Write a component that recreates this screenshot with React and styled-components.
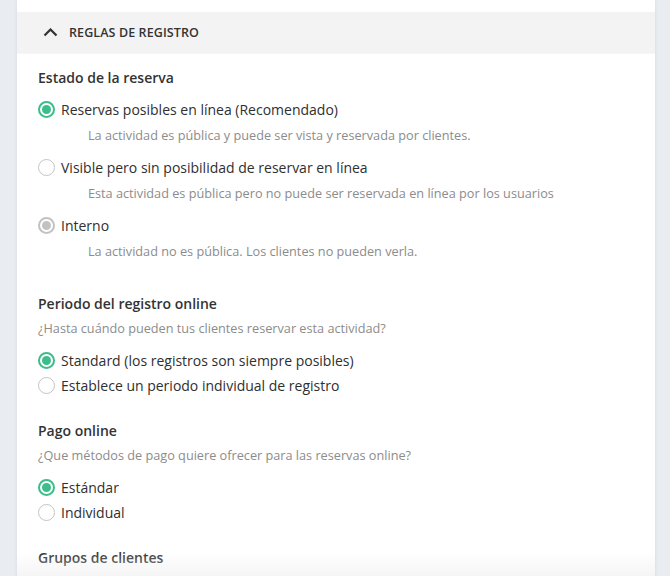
import styled, { createGlobalStyle } from 'styled-components';

const GlobalStyle = createGlobalStyle`
  html, body {
    margin: 0;
    padding: 0;
    background: #e9edf2;
    font-family: 'Open Sans', 'Noto Sans', sans-serif;
    -webkit-font-smoothing: antialiased;
  }
`;

const Page = styled.div`
  height: 576px;
  overflow: hidden;
  padding: 0 15px 0 17px;
  background: #e9edf2;
`;

const Panel = styled.div`
  position: relative;
  height: 100%;
  overflow: hidden;
  background: #fff;
  padding-top: 12px;
  box-shadow: 0 0 4px rgba(0, 0, 0, 0.08);
`;

const Header = styled.div`
  display: flex;
  align-items: center;
  gap: 11px;
  height: 42px;
  padding-left: 26px;
  background: #f3f3f3;
  border-bottom: 1px solid #f6f6f6;
  box-sizing: border-box;
  color: #333;
  font-size: 12.5px;
  font-weight: 600;
  letter-spacing: 0.1px;
  text-transform: uppercase;
`;

const Body = styled.div`
  padding: 14px 21px 0;
`;

const Section = styled.section`
  display: flex;
  flex-direction: column;
  margin-bottom: 25px;
`;

const Title = styled.h3`
  margin: 0;
  font-size: 14px;
  line-height: 20px;
  font-weight: 600;
  color: #333;
`;

const Hint = styled.p`
  margin: 5px 0 0;
  font-size: 12.7px;
  line-height: 18px;
  color: #8c8c8c;
`;

const Options = styled.div`
  display: flex;
  flex-direction: column;
  gap: 3px;
  margin-top: ${({ $tight }) => ($tight ? '10px' : '12px')};
`;

const Row = styled.label`
  display: flex;
  align-items: center;
  gap: 6px;
  height: 22px;
  font-size: 14px;
  color: #2f2f2f;
`;

const Radio = styled.span`
  position: relative;
  flex: none;
  width: 17px;
  height: 17px;
  border-radius: 50%;
  box-sizing: border-box;
  border: ${({ $state }) =>
    $state === 'on'
      ? '2px solid #3dbd8b'
      : $state === 'locked'
      ? '2px solid #c2c2c2'
      : '1.5px solid #c4c4c4'};

  &::after {
    content: '';
    position: absolute;
    inset: 2px;
    border-radius: 50%;
    background: ${({ $state }) =>
      $state === 'on' ? '#3dbd8b' : $state === 'locked' ? '#c2c2c2' : 'transparent'};
  }
`;

const Description = styled.div`
  margin: 6px 0 9px 50px;
  font-size: 12.7px;
  line-height: 18px;
  color: #8c8c8c;
`;

const Fade = styled.div`
  position: absolute;
  left: 0;
  right: 0;
  bottom: 0;
  height: 36px;
  background: linear-gradient(to bottom, rgba(255, 255, 255, 0), rgba(238, 238, 238, 0.9));
  pointer-events: none;
`;

const ChevronUp = () => (
  <svg width="15" height="9" viewBox="0 0 15 9" fill="none">
    <polyline points="1.5,7.5 7.5,1.5 13.5,7.5" stroke="#333" strokeWidth="2.2" />
  </svg>
);

const Option = ({ state, label, description }) => (
  <div>
    <Row>
      <Radio $state={state} />
      {label}
    </Row>
    {description && <Description>{description}</Description>}
  </div>
);

const App = () => (
  <Page>
    <GlobalStyle />
    <Panel>
      <Header>
        <ChevronUp />
        Reglas de registro
      </Header>
      <Body>
        <Section>
          <Title>Estado de la reserva</Title>
          <Options $tight>
            <Option
              state="on"
              label="Reservas posibles en línea (Recomendado)"
              description="La actividad es pública y puede ser vista y reservada por clientes."
            />
            <Option
              state="off"
              label="Visible pero sin posibilidad de reservar en línea"
              description="Esta actividad es pública pero no puede ser reservada en línea por los usuarios"
            />
            <Option
              state="locked"
              label="Interno"
              description="La actividad no es pública. Los clientes no pueden verla."
            />
          </Options>
        </Section>

        <Section>
          <Title>Periodo del registro online</Title>
          <Hint>¿Hasta cuándo pueden tus clientes reservar esta actividad?</Hint>
          <Options>
            <Option state="on" label="Standard (los registros son siempre posibles)" />
            <Option state="off" label="Establece un periodo individual de registro" />
          </Options>
        </Section>

        <Section>
          <Title>Pago online</Title>
          <Hint>¿Que métodos de pago quiere ofrecer para las reservas online?</Hint>
          <Options>
            <Option state="on" label="Estándar" />
            <Option state="off" label="Individual" />
          </Options>
        </Section>

        <Section>
          <Title>Grupos de clientes</Title>
          <Hint>
            Si una actividad es exclusiva para determinados clientes, puedes restringirla a grupos de clientes aquí.
          </Hint>
        </Section>
      </Body>
      <Fade />
    </Panel>
  </Page>
);

export default App;
